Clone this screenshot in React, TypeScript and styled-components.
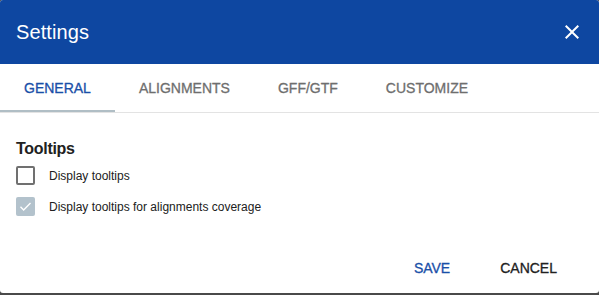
import React, { useState } from "react";
import styled, { createGlobalStyle } from "styled-components";

const GlobalStyle = createGlobalStyle`
  html, body {
    margin: 0;
    padding: 0;
    background: #4a4a4a;
    font-family: "Liberation Sans", Arial, sans-serif;
  }
`;

const Dialog = styled.div`
  width: 599px;
  height: 293px;
  background: #fff;
  border-radius: 3px;
  overflow: hidden;
  display: flex;
  flex-direction: column;
`;

const Header = styled.header`
  height: 64px;
  flex: none;
  background: #0e47a1;
  color: #fff;
  display: flex;
  align-items: center;
  justify-content: space-between;
  padding: 0 16px;
  box-sizing: border-box;
`;

const Title = styled.h2`
  margin: 0;
  font-size: 20px;
  font-weight: 400;
  letter-spacing: 0.1px;
`;

const CloseButton = styled.button`
  border: 0;
  background: none;
  padding: 0;
  width: 24px;
  height: 24px;
  margin-right: -1px;
  display: flex;
  align-items: center;
  justify-content: center;
  cursor: pointer;
`;

const TabBar = styled.div`
  height: 49px;
  flex: none;
  display: flex;
  border-bottom: 1px solid #e3e3e3;
  box-sizing: border-box;
`;

const Tab = styled.button<{ $active?: boolean }>`
  position: relative;
  border: 0;
  background: none;
  padding: 0 24px;
  height: 48px;
  font-family: inherit;
  font-size: 14px;
  font-weight: 400;
  -webkit-text-stroke: 0.3px currentColor;
  color: ${(p) => (p.$active ? "#1a4fa8" : "#6e6e6e")};
  cursor: pointer;
  &::after {
    content: "";
    position: absolute;
    left: 0;
    right: 0;
    bottom: 0;
    height: 2px;
    background: ${(p) => (p.$active ? "#b0bec5" : "transparent")};
  }
`;

const Content = styled.section`
  flex: 1;
  padding: 24px 16px 0;
`;

const SectionTitle = styled.h3`
  margin: 0;
  font-size: 16px;
  line-height: 23px;
  font-weight: 700;
  letter-spacing: -0.3px;
  color: #212121;
`;

const Row = styled.label`
  height: 31px;
  display: flex;
  align-items: center;
  gap: 14px;
  font-size: 12px;
  color: #212121;
`;

const Box = styled.span<{ $checked?: boolean }>`
  width: 19px;
  height: 19px;
  box-sizing: border-box;
  border-radius: 2px;
  border: ${(p) => (p.$checked ? "0" : "2px solid #707070")};
  background: ${(p) => (p.$checked ? "#b3c2cc" : "#fff")};
  display: flex;
  align-items: center;
  justify-content: center;
  flex: none;
`;

const Actions = styled.footer`
  height: 36px;
  display: flex;
  justify-content: flex-end;
  gap: 18px;
  padding: 0 26px 7px 0;
`;

const ActionButton = styled.button<{ $primary?: boolean }>`
  border: 0;
  background: none;
  padding: 0 16px;
  height: 36px;
  font-family: inherit;
  font-size: 14px;
  font-weight: 400;
  -webkit-text-stroke: 0.3px currentColor;
  color: ${(p) => (p.$primary ? "#1a4fa8" : "#212121")};
  cursor: pointer;
`;

const tabs = ["GENERAL", "ALIGNMENTS", "GFF/GTF", "CUSTOMIZE"];

const Checkbox = ({ checked }: { checked?: boolean }) => (
  <Box $checked={checked}>
    {checked && (
      <svg width="15" height="15" viewBox="0 0 24 24">
        <path d="M4 12.5l5 5L20 6.5" fill="none" stroke="#fff" strokeWidth="2.2" />
      </svg>
    )}
  </Box>
);

export default function App() {
  const [active, setActive] = useState(0);
  return (
    <>
      <GlobalStyle />
      <Dialog>
        <Header>
          <Title>Settings</Title>
          <CloseButton aria-label="close">
            <svg width="24" height="24" viewBox="0 0 24 24">
              <path
                d="M19 6.41L17.59 5 12 10.59 6.41 5 5 6.41 10.59 12 5 17.59 6.41 19 12 13.41 17.59 19 19 17.59 13.41 12z"
                fill="#fff"
              />
            </svg>
          </CloseButton>
        </Header>
        <TabBar>
          {tabs.map((t, i) => (
            <Tab key={t} $active={i === active} onClick={() => setActive(i)}>
              {t}
            </Tab>
          ))}
        </TabBar>
        <Content>
          <SectionTitle>Tooltips</SectionTitle>
          <Row>
            <Checkbox />
            Display tooltips
          </Row>
          <Row>
            <Checkbox checked />
            Display tooltips for alignments coverage
          </Row>
        </Content>
        <Actions>
          <ActionButton $primary>SAVE</ActionButton>
          <ActionButton>CANCEL</ActionButton>
        </Actions>
      </Dialog>
    </>
  );
}
